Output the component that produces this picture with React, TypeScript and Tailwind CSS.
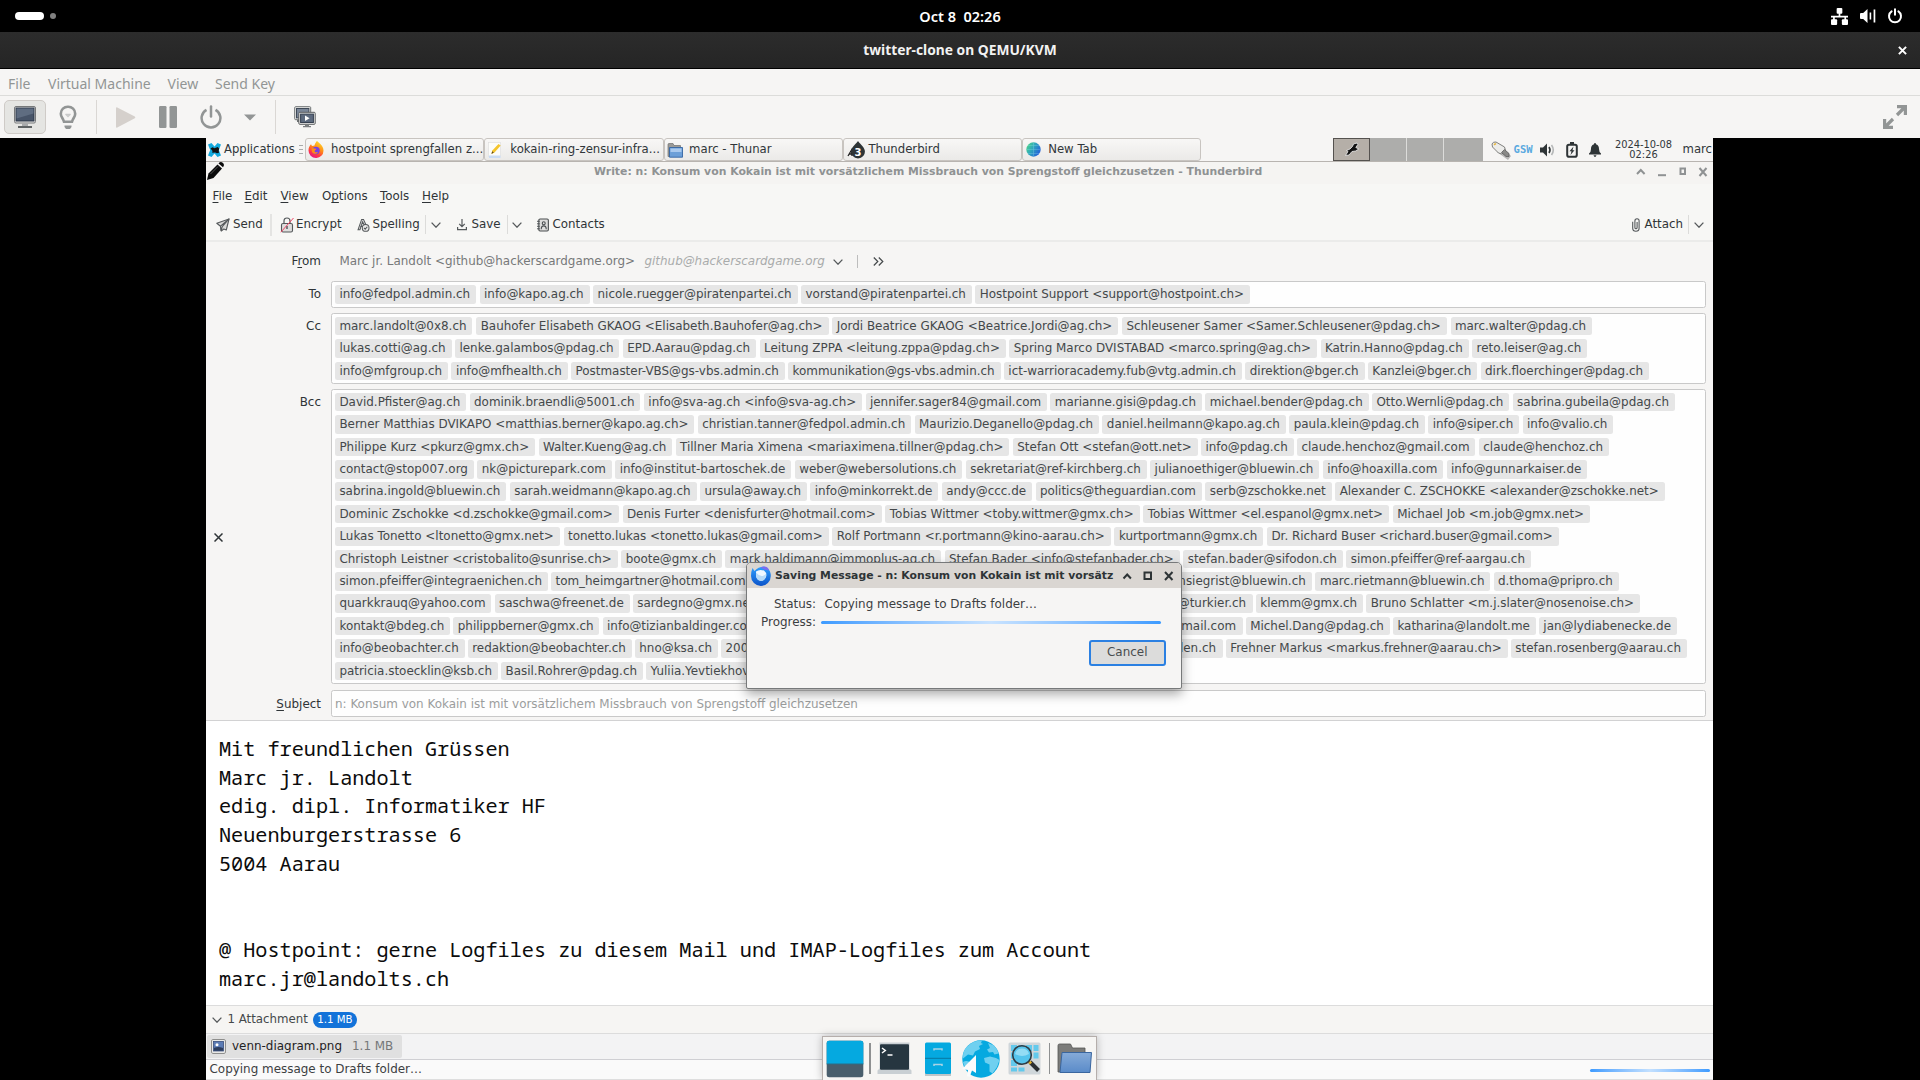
import type { ReactNode } from "react";

type ChipRow = { end: number; left: string[]; right?: string[] };

const ROW_START = 335;

const toRows: ChipRow[] = [
  {
    end: 1250,
    left: [
      "info@fedpol.admin.ch",
      "info@kapo.ag.ch",
      "nicole.ruegger@piratenpartei.ch",
      "vorstand@piratenpartei.ch",
      "Hostpoint Support <support@hostpoint.ch>",
    ],
  },
];

const ccRows: ChipRow[] = [
  {
    end: 1592,
    left: [
      "marc.landolt@0x8.ch",
      "Bauhofer Elisabeth GKAOG <Elisabeth.Bauhofer@ag.ch>",
      "Jordi Beatrice GKAOG <Beatrice.Jordi@ag.ch>",
      "Schleusener Samer <Samer.Schleusener@pdag.ch>",
      "marc.walter@pdag.ch",
    ],
  },
  {
    end: 1587.3,
    left: [
      "lukas.cotti@ag.ch",
      "lenke.galambos@pdag.ch",
      "EPD.Aarau@pdag.ch",
      "Leitung ZPPA <leitung.zppa@pdag.ch>",
      "Spring Marco DVISTABAD <marco.spring@ag.ch>",
      "Katrin.Hanno@pdag.ch",
      "reto.leiser@ag.ch",
    ],
  },
  {
    end: 1649,
    left: [
      "info@mfgroup.ch",
      "info@mfhealth.ch",
      "Postmaster-VBS@gs-vbs.admin.ch",
      "kommunikation@gs-vbs.admin.ch",
      "ict-warrioracademy.fub@vtg.admin.ch",
      "direktion@bger.ch",
      "Kanzlei@bger.ch",
      "dirk.floerchinger@pdag.ch",
    ],
  },
];

const bccRows: ChipRow[] = [
  {
    end: 1675,
    left: [
      "David.Pfister@ag.ch",
      "dominik.braendli@5001.ch",
      "info@sva-ag.ch <info@sva-ag.ch>",
      "jennifer.sager84@gmail.com",
      "marianne.gisi@pdag.ch",
      "michael.bender@pdag.ch",
      "Otto.Wernli@pdag.ch",
      "sabrina.gubeila@pdag.ch",
    ],
  },
  {
    end: 1613.3,
    left: [
      "Berner Matthias DVIKAPO <matthias.berner@kapo.ag.ch>",
      "christian.tanner@fedpol.admin.ch",
      "Maurizio.Deganello@pdag.ch",
      "daniel.heilmann@kapo.ag.ch",
      "paula.klein@pdag.ch",
      "info@siper.ch",
      "info@valio.ch",
    ],
  },
  {
    end: 1609,
    left: [
      "Philippe Kurz <pkurz@gmx.ch>",
      "Walter.Kueng@ag.ch",
      "Tillner Maria Ximena <mariaximena.tillner@pdag.ch>",
      "Stefan Ott <stefan@ott.net>",
      "info@pdag.ch",
      "claude.henchoz@gmail.com",
      "claude@henchoz.ch",
    ],
  },
  {
    end: 1587.3,
    left: [
      "contact@stop007.org",
      "nk@picturepark.com",
      "info@institut-bartoschek.de",
      "weber@webersolutions.ch",
      "sekretariat@ref-kirchberg.ch",
      "julianoethiger@bluewin.ch",
      "info@hoaxilla.com",
      "info@gunnarkaiser.de",
    ],
  },
  {
    end: 1664.7,
    left: [
      "sabrina.ingold@bluewin.ch",
      "sarah.weidmann@kapo.ag.ch",
      "ursula@away.ch",
      "info@minkorrekt.de",
      "andy@ccc.de",
      "politics@theguardian.com",
      "serb@zschokke.net",
      "Alexander C. ZSCHOKKE <alexander@zschokke.net>",
    ],
  },
  {
    end: 1590,
    left: [
      "Dominic Zschokke <d.zschokke@gmail.com>",
      "Denis Furter <denisfurter@hotmail.com>",
      "Tobias Wittmer <toby.wittmer@gmx.ch>",
      "Tobias Wittmer <el.espanol@gmx.net>",
      "Michael Job <m.job@gmx.net>",
    ],
  },
  {
    end: 1558.8,
    left: [
      "Lukas Tonetto <ltonetto@gmx.net>",
      "tonetto.lukas <tonetto.lukas@gmail.com>",
      "Rolf Portmann <r.portmann@kino-aarau.ch>",
      "kurtportmann@gmx.ch",
      "Dr. Richard Buser <richard.buser@gmail.com>",
    ],
  },
  {
    end: 1530.9,
    left: [
      "Christoph Leistner <cristobalito@sunrise.ch>",
      "boote@gmx.ch",
      "mark.haldimann@immoplus-ag.ch",
      "Stefan Bader <info@stefanbader.ch>",
      "stefan.bader@sifodon.ch",
      "simon.pfeiffer@ref-aargau.ch",
    ],
  },
  {
    end: 1618.7,
    left: ["simon.pfeiffer@integraenichen.ch", "tom_heimgartner@hotmail.com"],
    right: ["nsiegrist@bluewin.ch", "marc.rietmann@bluewin.ch", "d.thoma@pripro.ch"],
  },
  {
    end: 1640,
    left: ["quarkkrauq@yahoo.com", "saschwa@freenet.de", "sardegno@gmx.net"],
    right: ["@turkier.ch", "klemm@gmx.ch", "Bruno Schlatter <m.j.slater@nosenoise.ch>"],
  },
  {
    end: 1676.9,
    left: ["kontakt@bdeg.ch", "philippberner@gmx.ch", "info@tizianbaldinger.com"],
    right: ["@gmail.com", "Michel.Dang@pdag.ch", "katharina@landolt.me", "jan@lydiabenecke.de"],
  },
  {
    end: 1686.9,
    left: ["info@beobachter.ch", "redaktion@beobachter.ch", "hno@ksa.ch", "200"],
    right: ["den.ch", "Frehner Markus <markus.frehner@aarau.ch>", "stefan.rosenberg@aarau.ch"],
  },
  {
    end: 800,
    left: ["patricia.stoecklin@ksb.ch", "Basil.Rohrer@pdag.ch", "Yuliia.Yevtiekhov"],
    right: [],
  },
];

function Chip({ text, grow }: { text: string; grow?: "l" | "r" }) {
  return (
    <span
      className={
        "block h-[18.6px] shrink-0 rounded-[2.5px] bg-[#e6e6e6] leading-[19px] text-[#44484a] " +
        (grow === "l" ? "pl-10 pr-[6.5px]" : grow === "r" ? "pl-[4.4px] pr-10" : "pl-[4.4px] pr-[5.9px]")
      }
    >
      {text}
    </span>
  );
}

function Rows({ rows }: { rows: ChipRow[] }) {
  return (
    <div className="flex flex-col gap-[3.82px]">
      {rows.map((row, i) => (
        <div key={i} className="flex justify-between" style={{ width: row.end - ROW_START }}>
          {row.right ? (
            <>
              <div className="flex gap-[3.2px]">
                {row.left.map((t, j) => (
                  <Chip key={t} text={t} grow={j === row.left.length - 1 ? "r" : undefined} />
                ))}
              </div>
              <div className="flex gap-[3.2px]">
                {row.right.map((t, j) => (
                  <Chip key={t} text={t} grow={j === 0 ? "l" : undefined} />
                ))}
              </div>
            </>
          ) : (
            row.left.map((t) => <Chip key={t} text={t} />)
          )}
        </div>
      ))}
    </div>
  );
}

function Chevron({ className = "" }: { className?: string }) {
  return (
    <svg viewBox="0 0 10 6" className={"h-[6px] w-[10px] shrink-0 " + className} fill="none" stroke="#55595b" strokeWidth="1.3">
      <path d="M.6.6 5 5.2 9.4.6" />
    </svg>
  );
}

function MonitorIcon() {
  return (
    <svg viewBox="0 0 24 24" className="h-6 w-6">
      <rect x="1.5" y="1.5" width="21" height="16.5" rx="1.5" fill="#e9e9e7" stroke="#77797a" />
      <rect x="3" y="3" width="18" height="13" fill="#475468" stroke="#2d3747" />
      <path d="M3.5 3.5h17v5l-17 5z" fill="#6a788c" opacity=".7" />
      <path d="M9 18.5h6V21H9z" fill="#a8aaab" />
      <path d="M5 21h14v2H5z" fill="#5f6364" />
    </svg>
  );
}

function ScreensIcon() {
  return (
    <svg viewBox="0 0 22 22" className="h-[22px] w-[22px]">
      <rect x=".7" y=".7" width="16" height="13" rx="1" fill="#ececea" stroke="#6d7072" />
      <rect x="2.5" y="2.5" width="12.4" height="9.4" fill="#7a8698" stroke="#3f4957" />
      <path d="M3 14h3v2H3z" fill="#6d7072" />
      <rect x="4.8" y="6.3" width="16.4" height="12" rx="1" fill="#ececea" stroke="#5a5d5f" />
      <rect x="6.6" y="8.1" width="12.8" height="8.4" fill="#5d6a7e" stroke="#364050" />
      <path d="m11 9.5 4.6 2.8-4.6 2.8z" fill="#fff" />
      <path d="M11 18.5h4v1.5h2v1.3H9V20h2z" fill="#7b7e80" />
    </svg>
  );
}

function HostBars() {
  return (
    <>
      <div className="grid h-8 grid-cols-3 items-center bg-black text-white">
        <div className="flex items-center gap-[6px] pl-[15px]">
          <span className="h-2 w-[29px] rounded-full bg-white" />
          <span className="h-[6px] w-[6px] rounded-full bg-[#808080]" />
        </div>
        <div className="whitespace-pre text-center font-['Noto_Sans'] text-[14.5px] font-semibold leading-8">Oct 8  02:26</div>
        <div className="flex items-center justify-end gap-[11.5px] pr-[17px]">
          <svg viewBox="0 0 18 18" className="h-[17px] w-[17px]" fill="#fff">
            <rect x="6" y="0" width="6" height="6" rx="1" />
            <rect x="0" y="12" width="6.500" height="6" rx="1" />
            <rect x="11.500" y="12" width="6.500" height="6" rx="1" />
            <path d="M8.100 5h1.800v3.200H18V10h-2v3h-1.800v-3H4v3H2.200v-3H0V8.200h8.100z" />
          </svg>
          <svg viewBox="0 0 16 16" className="h-4 w-4" fill="#fff">
            <path d="M1 5h2.200L7.500 1v14L3.200 11H1Q0 11 0 10V6Q0 5 1 5z" />
            <path d="M9.600 4.500h1.600v7H9.600zM13.600 1.500h1.700v13h-1.700z" />
          </svg>
          <svg viewBox="0 0 16 16" className="h-4 w-4" fill="none" stroke="#fff" strokeWidth="2" strokeLinecap="round">
            <path d="M4.600 3.400a6 6 0 1 0 6.800 0M8 1.200v5.600" />
          </svg>
        </div>
      </div>
      <div className="grid h-[37px] grid-cols-[1fr_auto_1fr] items-center border-b border-black bg-linear-to-b from-[#2c2c2c] to-[#252525]">
        <span />
        <span className="font-['Noto_Sans'] text-[13.8px] font-bold text-[#f2f2f2]">twitter-clone on QEMU/KVM</span>
        <svg viewBox="0 0 9 9" className="mr-[13.5px] h-[9px] w-[9px] justify-self-end" stroke="#fff" strokeWidth="2">
          <path d="m.9.900 7.200 7.200M8.100.900.900 8.100" />
        </svg>
      </div>
      <div className="flex h-[27px] items-center border-b border-[#dcdcda] bg-[#f6f5f4] pl-2 pt-[2px] font-['Noto_Sans'] text-[14px] text-[#929595]">
        <span className="w-[40px]">File</span>
        <span className="w-[119.500px]">Virtual Machine</span>
        <span className="w-[47.500px]">View</span>
        <span>Send Key</span>
      </div>
      <div className="flex h-[42px] items-center bg-[#f6f5f4] pl-1 text-[#929595]">
        <span className="flex h-[34px] w-[42px] items-center justify-center rounded-[5px] border border-[#cfcbc7] bg-[#e5e5e2]">
          <MonitorIcon />
        </span>
        <svg viewBox="0 0 20 24" className="ml-[12px] h-6 w-5">
          <path
            d="M10 1.700a7 7 0 0 0-7.200 7c0 3.300 2.300 4.500 3.200 8.100h8c.9-3.600 3.200-4.800 3.200-8.100a7 7 0 0 0-7.200-7z"
            fill="none"
            stroke="#929595"
            strokeWidth="2.600"
          />
          <path d="m7.500 9 2.500 2.600L12.500 9M8 9.500h4" fill="none" stroke="#c9caca" strokeWidth="1.300" />
          <path d="M6.500 20.500h7v1.500L12 24H8l-1.500-2z" fill="#929595" />
        </svg>
        <span className="ml-[18px] h-[34px] w-px bg-[#dad7d4]" />
        <svg viewBox="0 0 20 21" className="ml-[19px] h-[21px] w-5" fill="#d5d0cc">
          <path d="M0 1.200Q0 0 1.300.500l17.500 8.900q1.200.900 0 1.900L1.300 20.500Q0 21 0 19.800z" />
        </svg>
        <svg viewBox="0 0 18 22" className="ml-[23px] h-[22px] w-[18px]" fill="#929595">
          <rect width="7.500" height="22" rx="1.200" />
          <rect x="10.500" width="7.500" height="22" rx="1.200" />
        </svg>
        <svg viewBox="0 0 22 24" className="ml-[23px] h-6 w-[22px]" fill="none" stroke="#929595" strokeWidth="2.500">
          <path d="M6.500 4.800a9.400 9.400 0 1 0 9 0" />
          <path d="M11 1.500v10" strokeLinecap="round" />
        </svg>
        <svg viewBox="0 0 12 6" className="ml-[22px] h-[7px] w-3" fill="#929595">
          <path d="M0 0h12L6 6z" />
        </svg>
        <span className="ml-[19px] h-[34px] w-px bg-[#dad7d4]" />
        <span className="ml-[18px]">
          <ScreensIcon />
        </span>
        <svg viewBox="0 0 24 24" className="ml-auto mr-[13px] h-6 w-6" fill="none" stroke="#929595" strokeWidth="3.200">
          <path d="M14 1.600h8.400V10M22 2l-8 8M10 22.400H1.600V14M2 22l8-8" />
        </svg>
      </div>
    </>
  );
}

function TaskButton({ icon, text, iconBox = "w-[23px]" }: { icon: ReactNode; text: string; iconBox?: string }) {
  return (
    <div className="flex h-[23px] w-[179.300px] items-center overflow-hidden rounded-[3px] border border-[#c8c4c0] bg-linear-to-b from-[#f8f7f6] to-[#ebeae8] pl-[2px]">
      <span className={"flex shrink-0 " + iconBox}>{icon}</span>
      <span className="whitespace-nowrap text-[11.700px] text-[#30363a]">{text}</span>
    </div>
  );
}

function Panel() {
  return (
    <div className="flex h-6 items-start border-b border-[#b8b4b0] bg-[#f6f5f4]">
      <div className="flex h-[23px] w-[99px] shrink-0 items-center pl-[2px]">
        <svg viewBox="0 0 13 14" className="h-[14px] w-[13px] shrink-0">
          <path d="M0 1.500 3.500 0 6.500 3.500 9.500 0 13 1.500 10.800 7 13 12.500 9.500 14 6.500 10.500 3.500 14 0 12.500 2.200 7z" fill="#12a9dd" />
          <path d="M2.500 5.500 4.500 4.300l2 1 3.200-1.300 1.500 1.500-.5 2 .3 2.300-2 .4-1.800-.7-3 .3.300-1.800z" fill="#111" />
        </svg>
        <span className="ml-[3px] text-[11.600px] text-[#30363a]">Applications</span>
        <span className="ml-[4px] flex flex-col gap-[3px]">
          <span className="h-px w-[4px] bg-[#aaa]" />
          <span className="h-px w-[4px] bg-[#aaa]" />
          <span className="h-px w-[4px] bg-[#aaa]" />
        </span>
      </div>
      <TaskButton
        text="hostpoint sprengfallen z..."
        icon={
          <svg viewBox="0 0 16 17" className="h-[17px] w-4">
            <defs>
              <linearGradient id="ff" x1=".8" y1="0" x2=".3" y2="1">
                <stop offset="0" stopColor="#ffe22e" />
                <stop offset=".45" stopColor="#ff8a16" />
                <stop offset=".75" stopColor="#ff3647" />
                <stop offset="1" stopColor="#e31587" />
              </linearGradient>
            </defs>
            <path d="M9 0c1 1.500 6.500 4 6.500 9.500A7.300 7.300 0 0 1 8 17 7.500 7.500 0 0 1 .5 9.300C.5 6.500 1.800 4.500 3 3.300L4 5l2.500-.5C7 2.500 8 1 9 0z" fill="url(#ff)" />
            <circle cx="8" cy="9.500" r="3.700" fill="#7542e5" />
            <path d="M3.500 7.500c2-.9 3.500.3 5 .2C8 9 6.500 9 6.500 10.500c1 1.200 2.500 1 3.500.2 0 2-4.500 3.300-6 .3z" fill="#ff8a16" />
          </svg>
        }
      />
      <TaskButton
        text="kokain-ring-zensur-infra..."
        icon={
          <svg viewBox="0 0 16 17" className="h-[17px] w-4">
            <rect x="1.500" y="1.500" width="12" height="14" fill="#fcfcfa" stroke="#ddd" strokeWidth=".6" />
            <path d="M2 14.500h11.500V17H2z" fill="#c9dcf5" />
            <path d="m4.500 13 .8-3.500L11.500 3l2.200 1.500-6.200 7z" fill="#f5c52c" />
            <path d="m4.500 13 .6-2.700 1.700 1.300z" fill="#5a4a20" />
          </svg>
        }
      />
      <TaskButton
        text="marc - Thunar"
        iconBox="w-[22.500px]"
        icon={
          <svg viewBox="0 0 16 16" className="h-4 w-4">
            <path d="M1 14.500V2.500Q1 1.500 2 1.500h4l1 2h6.500V14.500z" fill="#9a9a98" stroke="#70706e" strokeWidth=".7" />
            <path d="M2.500 5.500h13v9.700H2.500z" fill="#6c9fd8" stroke="#3465a4" strokeWidth=".9" />
            <path d="M3.500 6.500h11v3.500h-11z" fill="#a9c9ee" />
          </svg>
        }
      />
      <TaskButton
        text="Thunderbird"
        iconBox="w-[22.500px]"
        icon={
          <svg viewBox="0 0 20 20" className="h-5 w-5">
            <path d="M2 16 5.500 10 6 16M3 14h3" stroke="#222" strokeWidth="1.300" fill="none" />
            <path d="M12 1c1 2 6 5.500 6.800 9.500a6.900 6.900 0 1 1-13.600 0C6 6.500 11 3 12 1z" fill="#2e3436" />
            <text x="12" y="15.800" textAnchor="middle" fontSize="10" fontWeight="bold" fontFamily="DejaVu Sans" fill="#fff">3</text>
          </svg>
        }
      />
      <TaskButton
        text="New Tab"
        icon={
          <svg viewBox="0 0 15 17" className="ml-[1px] h-[17px] w-[15px]">
            <defs>
              <linearGradient id="nt" x1="0" y1="0" x2="1" y2=".6">
                <stop offset="0" stopColor="#54dd7c" />
                <stop offset=".5" stopColor="#2fa7bd" />
                <stop offset="1" stopColor="#2563d8" />
              </linearGradient>
            </defs>
            <circle cx="7.500" cy="8.500" r="7.200" fill="url(#nt)" />
            <path d="M7.500 1.500v14M.5 8.500h14M2 4.500h11M2 12.500h11" stroke="#bff" strokeWidth=".5" opacity=".4" />
          </svg>
        }
      />
      <div className="ml-auto flex h-[23px] items-stretch">
        <div className="flex w-[37px] items-center justify-center border border-[#55524f] bg-[#b5afa8]">
          <svg viewBox="0 0 16 15" className="h-[15px] w-4">
            <path
              d="M1.500 13.500 4 9.500 2.500 8.500 6 7l2.500-2.500 1-2.500 3.500-1 .8 1.500-2 3 3 1.500L11.500 9 8 9.500l-3 3.500z"
              fill="#111"
              stroke="#eee"
              strokeWidth=".8"
            />
          </svg>
        </div>
        <div className="w-[36px] bg-[#adadab]" />
        <div className="w-[37px] border-l border-[#dcdcda] bg-[#adadab]" />
        <div className="w-[39.500px] border-l border-[#dcdcda] bg-[#adadab]" />
      </div>
      <div className="flex h-[23px] shrink-0 items-center pl-[8px]">
        <svg viewBox="0 0 20 20" className="h-5 w-5">
          <path d="M6 12 17 20l3-4-6-6z" fill="#000" opacity=".25" />
          <path d="M1 4Q2 1.500 5 2l8.500 5q2 3-.5 5.500Q10.500 15 7.500 13L1.500 7z" fill="#ececea" stroke="#80807e" />
          <path d="m10.500 12.500 3-3 4.500 4v3h-3z" fill="#8a8a88" stroke="#555" strokeWidth=".7" />
          <path d="m2.500 4 2-1 1 1-2 1.500z" fill="#e8b63a" />
        </svg>
        <span className="ml-[3px] w-[21px] font-['DejaVu_Sans_Mono'] text-[10.500px] font-bold tracking-[0.1px] text-[#5aa9e0]">GSW</span>
        <svg viewBox="0 0 16 14" className="ml-[5px] h-[14px] w-4" fill="#2e3436">
          <path d="M0 4.500h3L7 .500v13l-4-4H0z" />
          <path d="M9 4q2 3 0 6" fill="none" stroke="#2e3436" strokeWidth="1.600" />
          <path d="M11.500 2q3.600 5 0 10" fill="none" stroke="#b5b7b8" strokeWidth="1.600" />
        </svg>
        <svg viewBox="0 0 12 16" className="ml-[10px] h-4 w-3">
          <rect x="1.200" y="2.700" width="9.600" height="12" rx="1.800" fill="none" stroke="#2e3436" strokeWidth="2" />
          <rect x="4" y="0" width="4" height="2.500" fill="#2e3436" />
          <path d="M7.500 4.500 3.500 9.200h2L4.500 13l4-4.800h-2z" fill="#2e3436" />
        </svg>
        <svg viewBox="0 0 12 14" className="ml-[11px] h-[14px] w-3" fill="#2e3436">
          <path d="M6 0q1 0 1 1.200C9.500 2 10 4 10 6q0 3 2 4.500V11.500H0v-1Q2 9 2 6c0-2 .5-4 3-4.800Q5 0 6 0zM4.500 12.300h3Q7 14 6 14t-1.500-1.700z" />
        </svg>
        <div className="ml-[14px] w-[58px] whitespace-nowrap pt-[1px] text-center text-[9.850px] leading-[10px] text-[#30363a]">
          2024-10-08
          <br />
          02:26
        </div>
        <span className="ml-[10px] w-[30.500px] text-[11.700px] text-[#30363a]">marc</span>
      </div>
    </div>
  );
}

function WindowTitle() {
  return (
    <div className="grid h-[22px] grid-cols-[388px_auto_1fr] items-center bg-[#f5f4f2]">
      <svg viewBox="0 0 17 18" className="ml-px h-[18px] w-[17px] self-start">
        <path d="M0 18 1.500 11.500 10.500 2.500l4.500 4L6.500 16z" fill="#0b0b0b" />
        <path d="M11.500 1.500Q13.500-1 15.700.700q2.300 2 .300 4.600z" fill="#0b0b0b" />
        <path d="m3.500 12 7.500-7.500" stroke="#666" strokeWidth=".8" />
      </svg>
      <span className="whitespace-nowrap pb-[2px] text-[10.860px] font-bold text-[#8f9293]">
        Write: n: Konsum von Kokain ist mit vorsätzlichem Missbrauch von Sprengstoff gleichzusetzen - Thunderbird
      </span>
      <svg viewBox="0 0 72 12" className="mb-[2px] mr-[5px] h-3 w-[72px] justify-self-end" fill="none" stroke="#8f9293" strokeWidth="2">
        <path d="m1 8 3.800-4L8.600 8" />
        <path d="M22 9.200h8" />
        <rect x="44.500" y="2.500" width="4.500" height="5.500" />
        <path d="m63.500 2 7 8m0-8-7 8" />
      </svg>
    </div>
  );
}

function Mn({ a, u, b, className }: { a?: string; u: string; b: string; className: string }) {
  return (
    <span className={className}>
      {a}
      <span className="underline decoration-1 underline-offset-2">{u}</span>
      {b}
    </span>
  );
}

function ComposeBars() {
  return (
    <div className="border-b-2 border-[#ebebea] bg-[#f7f7f5] text-[11.850px] text-[#2f3437]">
      <div className="flex h-6 items-center pl-[6.500px] pt-[2px]">
        <Mn className="w-8" u="F" b="ile" />
        <Mn className="w-[36px]" u="E" b="dit" />
        <Mn className="w-[41.500px]" u="V" b="iew" />
        <Mn className="w-[58px]" a="O" u="p" b="tions" />
        <Mn className="w-[42px]" u="T" b="ools" />
        <Mn className="" u="H" b="elp" />
      </div>
      <div className="flex h-8 items-center pl-[10px] pt-[1px]">
        <svg viewBox="0 0 14 14" className="h-[14px] w-[14px]" fill="#d9d9d8" stroke="#55595b" strokeWidth="1.100" strokeLinejoin="round">
          <path d="M13 1 .8 5.200l3.700 3L5.200 13l2.600-2 2.500 1z" />
          <path d="M13 1 4.500 8.200l.7 4.500 1-4z" fill="#f7f7f5" />
        </svg>
        <span className="ml-[3px] w-[30px]">Send</span>
        <span className="ml-[7px] h-[22px] w-[2px] bg-[#e4e4e2]" />
        <svg viewBox="0 0 14 16" className="ml-[8px] h-4 w-[14px]" fill="none">
          <rect x="1.500" y="6.500" width="11" height="8.500" rx="1.500" fill="#dededd" stroke="#55595b" strokeWidth="1.100" />
          <path d="M4 6.500V4q0-3 3-3t3 3v2.500" stroke="#55595b" strokeWidth="1.200" />
          <path d="M7 9v3" stroke="#55595b" strokeWidth="1.500" />
          <path d="M.8 15.200 13.500 1" stroke="#f04565" strokeWidth="1" />
        </svg>
        <span className="ml-[2px] w-[47px]">Encrypt</span>
        <svg viewBox="0 0 13 15" className="ml-[14px] h-[14px] w-[13px]" fill="none" stroke="#55595b" strokeWidth="1.100">
          <path d="M.7 12.500 4.500 1.500h2L9 7H7L5.500 4 2.700 12.500zM3 9h3" fill="#dededd" />
          <circle cx="8.800" cy="10.600" r="3.600" fill="#e8e8e7" />
          <path d="m7 10.700 1.300 1.300 2.300-2.600" />
        </svg>
        <span className="ml-[2.500px] w-[48px]">Spelling</span>
        <span className="ml-[4px] h-[19px] w-px bg-[#dcdcda]" />
        <Chevron className="ml-[5px]" />
        <svg viewBox="0 0 10 12" className="ml-[16px] h-3 w-[10px]" fill="none" stroke="#55595b" strokeWidth="1.200">
          <path d="M5 0v7.500M2.200 4.800 5 7.600l2.800-2.800M.6 8v2.600h8.800V8" />
        </svg>
        <span className="ml-[5px] w-[30px]">Save</span>
        <span className="ml-[5px] h-[19px] w-px bg-[#dcdcda]" />
        <Chevron className="ml-[4px]" />
        <svg viewBox="0 0 13 15" className="ml-[15px] h-[14px] w-3" fill="none" stroke="#4a4e50" strokeWidth="1.200">
          <rect x="2" y="1" width="10.300" height="13" rx="1.300" fill="#dededd" />
          <path d="M0 3.500h3M0 6.200h3M0 8.900h3M0 11.600h3" strokeWidth="1" />
          <circle cx="7.300" cy="5.600" r="1.600" />
          <path d="M4.600 12q0-3.600 2.700-3.600T10 12" />
        </svg>
        <span className="ml-[4px]">Contacts</span>
        <svg viewBox="0 0 8 14" className="ml-auto h-[14px] w-[8px]" fill="none" stroke="#55595b" strokeWidth="1.100">
          <path d="M.7 3.800v6.500q0 3 3.200 3t3.200-3V3q0-2.300-2.100-2.300T2.900 3v6.500q0 1.300 1.100 1.300t1.100-1.300V4" />
        </svg>
        <span className="ml-[5px] w-[40px]">Attach</span>
        <span className="ml-[3px] h-[19px] w-px bg-[#dcdcda]" />
        <Chevron className="ml-[5px] mr-[9.500px]" />
      </div>
    </div>
  );
}

const fieldBox = "w-[1375px] rounded-[2.5px] border border-[#c9c9c9] bg-[#fefefe] ";

function Headers() {
  return (
    <div className="h-[479px] border-b border-[#d2d2d3] bg-[#f6f5f4] text-[11.950px] text-[#2f3437]">
      <div className="flex h-[38.700px] items-center pt-[1px]">
        <Mn className="w-[115px] text-right" a="F" u="r" b="om" />
        <span className="ml-[18.500px] w-[305px] whitespace-nowrap text-[#77797a]">
          Marc jr. Landolt &lt;github@hackerscardgame.org&gt;
        </span>
        <span className="w-[182px] whitespace-nowrap text-[11.920px] italic text-[#a9abab]">github@hackerscardgame.org</span>
        <Chevron className="ml-[6px] mt-[1px]" />
        <span className="ml-[14px] h-[13px] w-px bg-[#bdbdbd]" />
        <svg viewBox="0 0 11 9" className="ml-[15px] h-[9px] w-[11px]" fill="none" stroke="#44484a" strokeWidth="1.200">
          <path d="m.8.500 4 4-4 4M5.800.500l4 4-4 4" />
        </svg>
      </div>
      <div className="flex">
        <span className="mr-[10px] w-[115px] pt-[5px] text-right">To</span>
        <div className={fieldBox + "h-[27px] py-[3.300px] pl-[3px]"}>
          <Rows rows={toRows} />
        </div>
      </div>
      <div className="mt-[5.400px] flex">
        <span className="mr-[10px] w-[115px] pt-[5px] text-right">Cc</span>
        <div className={fieldBox + "h-[71px] pl-[3px] pt-[2.700px]"}>
          <Rows rows={ccRows} />
        </div>
      </div>
      <div className="mt-[5px] flex">
        <div className="mr-[10px] flex w-[115px] flex-col pt-[5px] text-right">
          Bcc
          <svg viewBox="0 0 9 9" className="ml-[7.500px] mt-[121px] h-[9px] w-[9px]" stroke="#2f3437" strokeWidth="1.500">
            <path d="m.5.500 8 8m0-8-8 8" />
          </svg>
        </div>
        <div className={fieldBox + "h-[295px] pl-[3px] pt-[2.700px]"}>
          <Rows rows={bccRows} />
        </div>
      </div>
      <div className="mt-[6px] flex">
        <Mn className="mr-[10px] w-[115px] pt-[6px] text-right" u="S" b="ubject" />
        <div className={fieldBox + "h-[26.500px] pl-[3px] leading-[26px] text-[#9b9d9d]"}>
          n: Konsum von Kokain ist mit vorsätzlichem Missbrauch von Sprengstoff gleichzusetzen
        </div>
      </div>
    </div>
  );
}

const bodyText = `Mit freundlichen Grüssen
Marc jr. Landolt
edig. dipl. Informatiker HF
Neuenburgerstrasse 6
5004 Aarau


@ Hostpoint: gerne Logfiles zu diesem Mail und IMAP-Logfiles zum Account
marc.jr@landolts.ch`;

function Footer() {
  return (
    <div className="text-[11.950px]">
      <div className="flex h-[28.500px] items-center border-b border-t border-[#dcdcdc] bg-[#f6f5f3] pl-[6px] pt-[1px] text-[#44484a]">
        <Chevron />
        <span className="ml-[5.500px] text-[11.800px]">1 Attachment</span>
        <span className="ml-[5px] flex h-[16px] w-[44px] items-center justify-center rounded-full bg-[#1373d9] text-[10.200px] text-white">1.1 MB</span>
      </div>
      <div className="flex h-[26.500px] items-start border-b border-[#cfcfd3] bg-[#f3f3f4] pl-px pt-px">
        <div className="flex h-[23px] w-[195px] items-center rounded-[2px] bg-[#e0e0e0] pl-1 pt-[1px]">
          <svg viewBox="0 0 15 15" className="h-[15px] w-[15px]">
            <rect x=".6" y=".6" width="13.800" height="13.800" rx="1.200" fill="#f4f4f2" stroke="#858583" />
            <rect x="2.500" y="2.500" width="10" height="9.500" fill="#5c7cb5" stroke="#374c7a" strokeWidth=".8" />
            <path d="M3 9q4-2 9 0v2.700H3z" fill="#2d3e5f" />
            <circle cx="6" cy="5.700" r="1.500" fill="#fff" />
          </svg>
          <span className="ml-[6px] w-[120px] text-[#1f2224]">venn-diagram.png</span>
          <span className="text-[#757778]">1.1 MB</span>
        </div>
      </div>
      <div className="flex h-5 items-center justify-between border-b border-[#dedede] bg-[#fafafa] pl-[3.500px] pr-[3px] pt-[1px] text-[#3c4042]">
        <span>Copying message to Drafts folder…</span>
        <span className="h-[3px] w-[120px] rounded-full bg-linear-to-r from-[#3d9bff] via-[#c3e0ff] to-[#3d9bff]" />
      </div>
    </div>
  );
}

function Dialog() {
  return (
    <div className="absolute left-[540px] top-[424.300px] h-[126.500px] w-[436px] rounded-t-[5px] rounded-b-[2px] border border-[#77797a] bg-[#f6f5f4] text-[11.950px] text-[#3c4042] shadow-[0_5px_12px_rgba(0,0,0,0.35)]">
      <div className="flex h-[25px] items-center rounded-t-[4px] bg-[#dad6d2] pl-[4px] pt-[1px]">
        <svg viewBox="0 0 20 20" className="h-5 w-5">
          <defs>
            <linearGradient id="tb" x1="0" y1="0" x2="0" y2="1">
              <stop offset="0" stopColor="#2fa0ff" />
              <stop offset="1" stopColor="#0b53c9" />
            </linearGradient>
          </defs>
          <path d="M1.500 2 3.500 5Q7 .800 13 .500l3.500 1.500q3.300 3 3.300 8A9.900 9.900 0 0 1 0 10Q0 5.500 1.500 2z" fill="url(#tb)" />
          <path d="M9.500 1.500q4-2 7.500.5l1 2.500-4.500-1z" fill="#7b6cf0" />
          <path d="M5 5.500Q8 3 13 4.500q2.700 2 2.300 5.500-1.300 4.500-5.300 4.500T5 10z" fill="#eef7ff" />
          <path d="M5 6.500q5 6 10 1.500l-.3 3.500q-1.500 3.500-4.700 3.500t-4.800-4z" fill="#b5daf9" />
        </svg>
        <span className="ml-[4px] w-[340px] whitespace-nowrap text-[10.840px] font-bold text-[#2e3436]">
          Saving Message - n: Konsum von Kokain ist mit vorsätz
        </span>
        <svg viewBox="0 0 52 10" className="ml-[7px] h-[10px] w-[52px]" fill="none" stroke="#2e3436" strokeWidth="2">
          <path d="m1.500 7.500 3.700-4 3.700 4" />
          <rect x="22.500" y="1.500" width="6.500" height="6.500" />
          <path d="m43 1 7.500 8m0-8L43 9" />
        </svg>
      </div>
      <div className="mt-[7px] grid grid-cols-[69px_1fr]">
        <span className="h-[18px] text-right leading-[18px]">Status:</span>
        <span className="pl-[8.500px] leading-[18px]">Copying message to Drafts folder…</span>
        <span className="h-[18px] text-right leading-[18px]">Progress:</span>
        <span className="flex items-center pl-[4.500px]">
          <span className="h-[3.500px] w-[340px] rounded-full bg-linear-to-r from-[#3d9bff] via-[#c9e3ff] to-[#3d9bff]" />
        </span>
      </div>
      <button className="ml-[341.500px] mt-[8.500px] flex h-[26px] w-[77.500px] items-center justify-center rounded-[3px] border-2 border-[#2b80e2] bg-[#dcdcdb] text-[#494d4f]">
        Cancel
      </button>
    </div>
  );
}

function Dock() {
  return (
    <div className="absolute bottom-0 left-[616px] flex h-11 w-[275px] items-center border border-b-0 border-[#b5aeab] bg-[#f6f5f3] pl-[3px] shadow-[0_0_8px_rgba(0,0,0,0.25)]">
      <svg viewBox="0 0 38 38" className="h-[38px] w-[38px]">
        <rect x=".7" y=".7" width="36.600" height="36.600" rx="2.500" fill="#495e6c" />
        <path d="M.7 24V3Q.7.700 3 .700h32q2.300 0 2.300 2.300v21z" fill="#05a9e0" />
        <path d="M.7 24h36.600" stroke="#2d6c86" strokeWidth="1" />
      </svg>
      <span className="ml-[5px] h-[31px] w-[1.500px] bg-[#8e9091]" />
      <svg viewBox="0 0 35 33" className="ml-[6.500px] h-[33px] w-[35px]">
        <path d="M2.500.5h30v26l2 2V32H.5v-3.500l2-2z" fill="#c9cfd3" />
        <rect x="3" y="2.300" width="29" height="25.500" rx="1" fill="#263640" />
        <path d="m5 6 3.300 2.500L5 11" stroke="#fff" strokeWidth="1.500" fill="none" />
        <path d="M10.500 13h5" stroke="#fff" strokeWidth="1.500" />
      </svg>
      <svg viewBox="0 0 28 34" className="ml-[11.500px] h-[34px] w-7">
        <path d="M1 31h26v3H1z" fill="#bfc5c8" />
        <rect x="1" y=".500" width="26" height="31.500" rx="1.500" fill="#05a9e0" />
        <path d="M1 16.300h26" stroke="#0877a0" />
        <path d="M10 8.500V7h8v1.500M10 24V22.500h8V24" stroke="#a8d3e4" strokeWidth="1.500" fill="none" />
      </svg>
      <svg viewBox="0 0 38 38" className="ml-[10px] h-[38px] w-[38px]">
        <circle cx="19" cy="19" r="18.700" fill="#05a9e0" />
        <path d="M9 3.500Q13 .500 20 .500l-1 2.500 2 1-4 2 1 3-5 2.500-2 4-5-1L1 18.500Q0 9 9 3.500z" fill="#6fd0f0" />
        <path d="m26 3 6 2.500q3.500 4 4.500 8l-4 1-1.500-2.500-4 .5-2-3 3-1.500z" fill="#6fd0f0" />
        <path d="m22 18 6-1.500 6 1.500 3.500 2-2.500 7-4.500 6.500-3-2v-7l-4.500-2z" fill="#6fd0f0" />
        <path d="M1 22q4-2.500 8 1l-4 5Q2 27 1 22z" fill="#6fd0f0" />
        <path d="M14 15v18l-4-2.500L7.500 37l-2.500-1 1-6-6-1z" fill="#fbfbfb" />
      </svg>
      <svg viewBox="0 0 33 33" className="ml-[8px] h-[33px] w-[33px]">
        <rect x=".5" y=".500" width="32" height="32" rx="1.500" fill="#cfd6da" />
        <path d="M3 3h6v6H3zM10.500 3h6v6h-6zM18 3h6v6h-6zM25.500 3h5v6h-5zM3 10.500h6v6H3zM25.500 10.500h5v6h-5zM3 18h6v6H3zM3 25.500h6v4H3zM10.500 25.500h6v4h-6z" fill="#62c9ec" />
        <path d="m22 20 8.500 8.500" stroke="#2a2f33" strokeWidth="4" />
        <path d="m20.500 19 2.500 2.500" stroke="#e2b12d" strokeWidth="3" />
        <circle cx="14" cy="13" r="9.300" fill="#55c4ec" stroke="#2f3c44" strokeWidth="1.600" />
        <path d="M7 12a7.200 7.200 0 0 1 14 0q-7 4-14 0z" fill="#a4e2f6" opacity=".8" />
      </svg>
      <span className="ml-[8px] h-[31px] w-[1.500px] bg-[#8e9091]" />
      <svg viewBox="0 0 35 32" className="ml-[6.500px] h-8 w-[35px]">
        <defs>
          <linearGradient id="fd" x1="0" y1="0" x2="0" y2="1">
            <stop offset="0" stopColor="#86abd8" />
            <stop offset="1" stopColor="#5a8bc9" />
          </linearGradient>
        </defs>
        <path d="M1 29V2.500Q1 1 2.500 1h11l2 4H28v6L26 29z" fill="#7c7c7a" stroke="#565654" strokeWidth=".8" />
        <path d="M5 9.500h29.500L33 29.500H3z" fill="url(#fd)" stroke="#3a669f" />
      </svg>
    </div>
  );
}

export default function App() {
  return (
    <div className="h-[1080px] w-[1920px] overflow-hidden bg-black font-['DejaVu_Sans',sans-serif]">
      <HostBars />
      <div className="relative ml-[206px] h-[942px] w-[1507px] overflow-hidden bg-white">
        <Panel />
        <WindowTitle />
        <ComposeBars />
        <Headers />
        <pre className="h-[284px] bg-white pl-[13px] pt-[13px] font-['Noto_Sans_Mono',monospace] text-[20.200px] leading-[28.720px] text-[#0c0c0c]">
          {bodyText}
        </pre>
        <Footer />
        <Dialog />
        <Dock />
      </div>
    </div>
  );
}
